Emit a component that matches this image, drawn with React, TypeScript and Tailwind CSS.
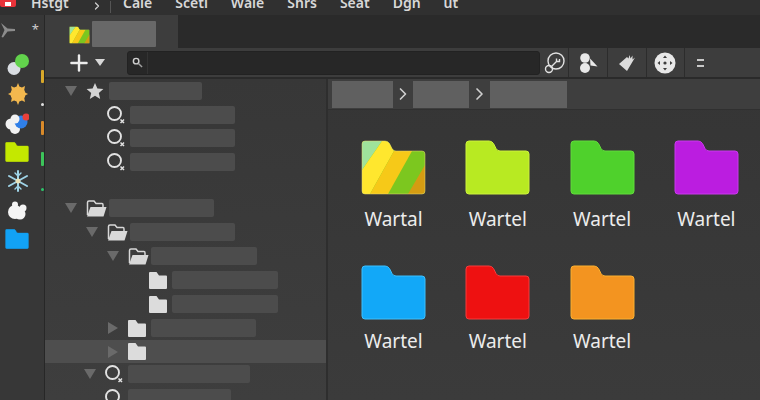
import { ChevronRight, Plus } from "lucide-react";

const menuItems = ["Cale", "Sceti", "Wale", "Shrs", "Seat", "Dgn", "ut"];

const FOLDER_PATH =
  "M3 0H23Q26 0 27.5 2.5L30 7.5Q31.5 10 34 10H60Q63 10 63 13V50Q63 53 60 53H3Q0 53 0 50V3Q0 0 3 0Z";

function Folder({ color, stroke, className }: { color: string; stroke: string; className: string }) {
  return (
    <svg viewBox="-1 -1 65 55" className={className}>
      <path d={FOLDER_PATH} fill={color} stroke={stroke} strokeWidth="1" />
    </svg>
  );
}

function RainbowFolder({ id, className }: { id: string; className: string }) {
  return (
    <svg viewBox="-1 -1 65 55" className={className}>
      <clipPath id={id}>
        <path d={FOLDER_PATH} />
      </clipPath>
      <g clipPath={`url(#${id})`}>
        <rect x="0" y="0" width="63" height="53" fill="#7cc71f" />
        <polygon points="0,0 20,0 0,29" fill="#9fe29b" />
        <polygon points="20,0 30,0 32,10 8,53 0,53 0,29" fill="#ffe72e" />
        <polygon points="32,10 50,10 26,53 8,53" fill="#f6c918" />
        <polygon points="63,24 63,53 46,53" fill="#d59c12" />
      </g>
      <path d={FOLDER_PATH} fill="none" stroke="#e8d870" strokeOpacity="0.5" strokeWidth="1" />
    </svg>
  );
}

function Triangle({ dir }: { dir: "down" | "right" | "none" }) {
  if (dir === "none") return <span className="w-[12px] shrink-0" />;
  return (
    <svg viewBox="0 0 12 12" className="w-[12px] h-[12px] shrink-0">
      {dir === "down" ? (
        <polygon points="0,1 12,1 6,11" fill="#6a6a6a" />
      ) : (
        <polygon points="1,0 11,6 1,12" fill="#6a6a6a" />
      )}
    </svg>
  );
}

function StarIcon() {
  return (
    <svg viewBox="0 0 18 18" className="w-[18px] h-[18px]">
      <polygon points="9,1 11.4,6.6 17.4,7.1 12.8,11 14.2,17 9,13.8 3.8,17 5.2,11 0.6,7.1 6.6,6.6" fill="#d4d4d4" />
    </svg>
  );
}

function OxIcon() {
  return (
    <svg viewBox="0 0 18 18" className="w-[18px] h-[18px]">
      <circle cx="7.5" cy="7.5" r="6.5" fill="none" stroke="#e2e2e2" strokeWidth="1.9" />
      <path d="M13.5 13.5L17 17M17 13.5L13.5 17" stroke="#e2e2e2" strokeWidth="1.5" />
    </svg>
  );
}

function OpenFolderIcon() {
  return (
    <svg viewBox="0 0 21 17" className="w-[21px] h-[17px]">
      <path d="M1.5 15V2.5Q1.5 1 3 1H8L10 3.5H16Q17 3.5 17 5V7" fill="none" stroke="#d8d8d8" strokeWidth="1.5" />
      <path d="M4.5 7H20.5L17.5 16.5H1Z" fill="#d8d8d8" />
    </svg>
  );
}

function ClosedFolderIcon() {
  return (
    <svg viewBox="0 0 18 17" className="w-[18px] h-[17px]">
      <path d="M0 1Q0 0 1 0H7.5L10 3.5H17Q18 3.5 18 4.5V16Q18 17 17 17H1Q0 17 0 16Z" fill="#dcdcdc" />
    </svg>
  );
}

type TreeRow = {
  rowClass: string;
  padClass: string;
  caret: "down" | "right" | "none";
  icon: "star" | "ox" | "open" | "closed";
  barClass?: string;
};

const rows: TreeRow[] = [
  { rowClass: "h-[24px]", padClass: "pl-[20px]", caret: "down", icon: "star", barClass: "w-[93px]" },
  { rowClass: "h-[23px]", padClass: "pl-[41px]", caret: "none", icon: "ox", barClass: "w-[105px]" },
  { rowClass: "h-[24px]", padClass: "pl-[41px]", caret: "none", icon: "ox", barClass: "w-[105px]" },
  { rowClass: "h-[23px]", padClass: "pl-[41px]", caret: "none", icon: "ox", barClass: "w-[105px]" },
  { rowClass: "h-[23px]", padClass: "pl-[20px]", caret: "none", icon: "star" },
  { rowClass: "h-[24px]", padClass: "pl-[20px]", caret: "down", icon: "open", barClass: "w-[105px]" },
  { rowClass: "h-[24px]", padClass: "pl-[41px]", caret: "down", icon: "open", barClass: "w-[105px]" },
  { rowClass: "h-[24px]", padClass: "pl-[62px]", caret: "down", icon: "open", barClass: "w-[106px]" },
  { rowClass: "h-[24px]", padClass: "pl-[83px]", caret: "none", icon: "closed", barClass: "w-[106px]" },
  { rowClass: "h-[24px]", padClass: "pl-[83px]", caret: "none", icon: "closed", barClass: "w-[106px]" },
  { rowClass: "h-[24px]", padClass: "pl-[62px]", caret: "right", icon: "closed", barClass: "w-[105px]" },
  { rowClass: "h-[23px] bg-[#4e4e4e]", padClass: "pl-[62px]", caret: "right", icon: "closed" },
  { rowClass: "h-[22px]", padClass: "pl-[39px]", caret: "down", icon: "ox", barClass: "w-[122px]" },
  { rowClass: "h-[26px]", padClass: "pl-[39px]", caret: "none", icon: "ox", barClass: "w-[103px]" },
];

const folders = [
  { name: "Wartal", color: "rainbow", stroke: "" },
  { name: "Wartel", color: "#b8ea22", stroke: "#cdf23c" },
  { name: "Wartel", color: "#4fd12c", stroke: "#62dc3c" },
  { name: "Wartel", color: "#bb1de0", stroke: "#c93aec" },
  { name: "Wartel", color: "#12a8f8", stroke: "#3cc0ff" },
  { name: "Wartel", color: "#ee1111", stroke: "#f83c3c" },
  { name: "Wartel", color: "#f39420", stroke: "#fbb030" },
];

export default function App() {
  return (
    <div className="w-[760px] h-[400px] overflow-hidden flex flex-col bg-[#383838] font-['Noto_Sans',sans-serif]">
      {/* menu bar, cut off by the top of the window */}
      <div className="h-[15px] shrink-0 bg-[#303030] flex items-end overflow-hidden text-[14px] leading-[18px] font-semibold text-[#d8d8d8]">
        <div className="w-[16px] h-[15px] self-start -mt-[8px] rounded-b-[2px] bg-[#e8333a] flex items-end justify-center pb-[1px] shrink-0">
          <span className="w-[6px] h-[4px] bg-white" />
        </div>
        <span className="ml-[15px] w-[60px] shrink-0 mb-[3px]">Hstgt</span>
        <ChevronRight className="w-[12px] h-[12px] mb-[3px] shrink-0 text-[#cfcfcf]" strokeWidth={2.5} />
        <span className="ml-[7px] mb-[2px] w-px h-[12px] bg-[#555] shrink-0" />
        <div className="ml-[12px] flex gap-[23px] mb-[3px]">
          {menuItems.map((m) => (
            <span key={m}>{m}</span>
          ))}
        </div>
      </div>

      <div className="flex flex-1 min-h-0">
        {/* left rail */}
        <div className="w-[45px] shrink-0 bg-[#373737] border-r border-r-[#272727] flex">
          <div className="w-[40px] flex flex-col">
            <div className="h-[35.5px] flex items-center justify-between pr-[1px] pt-[2px] shrink-0 -mb-[0.5px]">
              <svg viewBox="0 0 16 16" className="w-[16px] h-[16px] mb-[7px]">
                <path d="M1 1L7.5 6.5L15 7L15 9L7.5 9.5L3 15.5L1.5 15L4.5 8Z" fill="#8c8c8c" />
              </svg>
              <span className="text-[13px] leading-none text-[#cfcfcf] mb-[8px]">*</span>
            </div>
            <div className="flex flex-col pl-[5px]">
              <div className="h-[29px] flex items-center">
                <svg viewBox="0 0 24 24" className="w-[24px] h-[24px]">
                  <ellipse cx="9" cy="15.5" rx="6.5" ry="6.5" fill="#d9dde2" />
                  <circle cx="17" cy="8" r="7" fill="#62d24c" />
                </svg>
              </div>
              <div className="h-[29px] flex items-center">
                <svg viewBox="0 0 24 24" className="w-[24px] h-[24px]">
                  <circle cx="13" cy="12" r="7.5" fill="#f3b84e" />
                  <path d="M13 1L15 6H11ZM13 23L11 18H15ZM3 12L7 10V14ZM23 12L19 14V10ZM6 4L10 6L7 9ZM20 4L19 9L16 6ZM6 20L7 15L10 18ZM20 20L16 18L19 15Z" fill="#f3b84e" />
                </svg>
              </div>
              <div className="h-[29px] flex items-center">
                <svg viewBox="0 0 24 24" className="w-[24px] h-[24px]">
                  <circle cx="6" cy="13" r="5.5" fill="#f2f2f2" />
                  <circle cx="10" cy="18" r="5" fill="#f2f2f2" />
                  <circle cx="16" cy="11" r="6.5" fill="#2f7fe8" />
                  <circle cx="10" cy="8" r="4.5" fill="#f2f2f2" />
                  <circle cx="21" cy="6" r="3.5" fill="#e8403a" />
                </svg>
              </div>
              <div className="h-[29px] flex items-center">
                <Folder color="#c4e800" stroke="#c4e800" className="w-[24px] h-[20px]" />
              </div>
              <div className="h-[29px] flex items-center">
                <svg viewBox="0 0 24 24" className="w-[24px] h-[24px]" stroke="#9fd4e8" strokeWidth="2" strokeLinecap="round">
                  <path d="M13 2V22M4 7L22 17M22 7L4 17" />
                  <path d="M10 4L13 7L16 4M10 20L13 17L16 20" strokeWidth="1.4" fill="none" />
                  <circle cx="13" cy="12" r="2.5" fill="#e8e0b8" stroke="none" />
                </svg>
              </div>
              <div className="h-[29px] flex items-center">
                <svg viewBox="0 0 24 24" className="w-[24px] h-[24px]" fill="#f4f4f4">
                  <circle cx="10" cy="14" r="7" />
                  <circle cx="15" cy="16" r="5.5" />
                  <circle cx="10" cy="6.5" r="3" />
                  <circle cx="18" cy="10" r="3.5" />
                </svg>
              </div>
              <div className="h-[29px] flex items-center">
                <Folder color="#12a2f5" stroke="#12a2f5" className="w-[24px] h-[20px]" />
              </div>
            </div>
          </div>
          {/* little status marks at the edge of the rail */}
          <div className="w-[4px] flex flex-col items-center">
            <span className="mt-[55px] w-[3px] h-[13px] rounded-[1px] bg-[#d8a82a]" />
            <span className="mt-[20px] w-[3px] h-[3px] rounded-full bg-[#e0e0e0]" />
            <span className="mt-[15px] w-[3px] h-[14px] rounded-[1px] bg-[#d98a2a]" />
            <span className="mt-[17px] w-[3px] h-[14px] rounded-[1px] bg-[#3cc45a]" />
            <span className="mt-[22px] w-[3px] h-[3px] rounded-full bg-[#2cc46a]" />
          </div>
        </div>

        <div className="flex-1 min-w-0 flex flex-col">
          {/* tab strip */}
          <div className="h-[33px] shrink-0 bg-[#2a2a2a] flex">
            <div className="w-[133px] bg-[#3d3d3d] flex items-end pl-[24px]">
              <RainbowFolder id="tabFolder" className="w-[21px] h-[18px] mb-[4px]" />
              <div className="ml-[2px] w-[64px] h-[26px] bg-[#686868] rounded-[1px] mb-[1px]" />
            </div>
          </div>

          {/* toolbar */}
          <div className="h-[31px] shrink-0 bg-[#3d3d3d] border-b-2 border-b-[#2a2a2a] flex items-center">
            <Plus className="ml-[21px] w-[26px] h-[26px] text-[#ececec] shrink-0" strokeWidth={2.2} />
            <svg viewBox="0 0 10 7" className="ml-[3px] w-[10px] h-[7px] shrink-0">
              <polygon points="0,0 10,0 5,7" fill="#d8d8d8" />
            </svg>
            <div className="ml-[22px] w-[413px] h-[24px] shrink-0 rounded-[3px] bg-[#272727] border border-[#222] flex">
              <div className="w-[20px] border-r border-r-[#333] flex items-center justify-center">
                <svg viewBox="0 0 12 12" className="w-[11px] h-[11px]">
                  <circle cx="4.5" cy="4.5" r="3" fill="none" stroke="#d0d0d0" strokeWidth="1.6" />
                  <path d="M7 7L11 11" stroke="#a0a0a0" strokeWidth="1.6" />
                </svg>
              </div>
            </div>
            <div className="w-[29px] h-full flex items-center justify-center border-r border-r-[#2c2c2c] shrink-0">
              <svg viewBox="0 0 22 22" className="w-[22px] h-[22px]" fill="none" stroke="#e2e2e2" strokeWidth="1.4">
                <circle cx="13" cy="9" r="8" />
                <circle cx="6" cy="17" r="3.5" />
                <path d="M8.5 14.5L13.5 9.5M13.5 9.5H16.5V7M13.5 9.5V6.5" />
              </svg>
            </div>
            <div className="w-[39px] h-full flex items-center justify-center border-r border-r-[#2c2c2c] shrink-0">
              <svg viewBox="0 0 20 20" className="w-[20px] h-[20px]" fill="#e8e8e8">
                <circle cx="7" cy="5" r="4.8" />
                <circle cx="7" cy="15" r="5" />
                <path d="M12 5.5L19.5 13.5L12.5 12.5Z" />
              </svg>
            </div>
            <div className="w-[39px] h-full flex items-center justify-center border-r border-r-[#2c2c2c] shrink-0">
              <svg viewBox="0 0 18 18" className="w-[18px] h-[18px]" fill="#dcdcdc">
                <path d="M1 10L9 3L10.5 4.5L11.5 1L12.5 4.5L14.5 1.5L14.5 5.5L17 3.5L9 17Z" />
              </svg>
            </div>
            <div className="w-[38px] h-full flex items-center justify-center border-r border-r-[#2c2c2c] shrink-0">
              <svg viewBox="0 0 22 22" className="w-[22px] h-[22px] -ml-[2px]">
                <circle cx="11" cy="11" r="10.5" fill="#e8e8e8" />
                <path d="M11 3.5L13 6H9ZM11 18.5L9 16H13ZM3.5 11L6 9V13ZM18.5 11L16 13V9Z" fill="#3d3d3d" />
                <circle cx="11" cy="11" r="1.6" fill="#3d3d3d" />
              </svg>
            </div>
            <div className="pl-[12px] flex flex-col gap-[4px]">
              <span className="w-[7px] h-[2px] bg-[#c8c8c8]" />
              <span className="w-[7px] h-[2px] bg-[#c8c8c8]" />
            </div>
          </div>

          <div className="flex flex-1 min-h-0">
            {/* tree */}
            <div className="w-[283px] shrink-0 bg-linear-to-b from-[#373737] to-[#3e3e3e] border-r-2 border-r-[#2e2e2e] flex flex-col overflow-hidden">
              {rows.map((r, i) => (
                <div key={i} className={`${r.rowClass} ${r.padClass} shrink-0 flex items-center`}>
                  <Triangle dir={r.caret} />
                  {r.caret === "none" && r.barClass === undefined ? null : (
                    <>
                      <span className="w-[9px] shrink-0" />
                      <span className="w-[23px] shrink-0 flex items-center">
                        {r.icon === "star" && <StarIcon />}
                        {r.icon === "ox" && <OxIcon />}
                        {r.icon === "open" && <OpenFolderIcon />}
                        {r.icon === "closed" && <ClosedFolderIcon />}
                      </span>
                      {r.barClass && <span className={`${r.barClass} h-[18px] rounded-[2px] bg-[#4c4c4c] shrink-0`} />}
                    </>
                  )}
                </div>
              ))}
            </div>

            {/* folder view */}
            <div className="flex-1 min-w-0 flex flex-col bg-linear-to-b from-[#353535] to-[#3b3b3b]">
              <div className="h-[31px] shrink-0 bg-[#3e3e3e] border-b border-b-[#303030] flex items-center pl-[4px] text-[#cfcfcf]">
                <span className="w-[61px] h-[27px] bg-[#606060]" />
                <ChevronRight className="w-[20px] h-[20px] shrink-0" strokeWidth={2} />
                <span className="w-[56px] h-[27px] bg-[#606060]" />
                <ChevronRight className="w-[21px] h-[20px] shrink-0" strokeWidth={2} />
                <span className="w-[77px] h-[27px] bg-[#606060]" />
              </div>
              <div className="pt-[30px] pl-[33px] grid grid-cols-[repeat(4,104.3px)] gap-y-[34px]">
                {folders.map((f, i) => (
                  <div key={i} className="w-[65px] flex flex-col items-center">
                    {f.color === "rainbow" ? (
                      <RainbowFolder id="bigFolder" className="w-[65px] h-[55px]" />
                    ) : (
                      <Folder color={f.color} stroke={f.stroke} className="w-[65px] h-[55px]" />
                    )}
                    <span className={`${i < 4 ? "mt-[12px]" : "mt-[9px]"} text-[19px] leading-[24px] text-[#ececec] whitespace-nowrap`}>
                      {f.name}
                    </span>
                  </div>
                ))}
              </div>
            </div>
          </div>
        </div>
      </div>
    </div>
  );
}
